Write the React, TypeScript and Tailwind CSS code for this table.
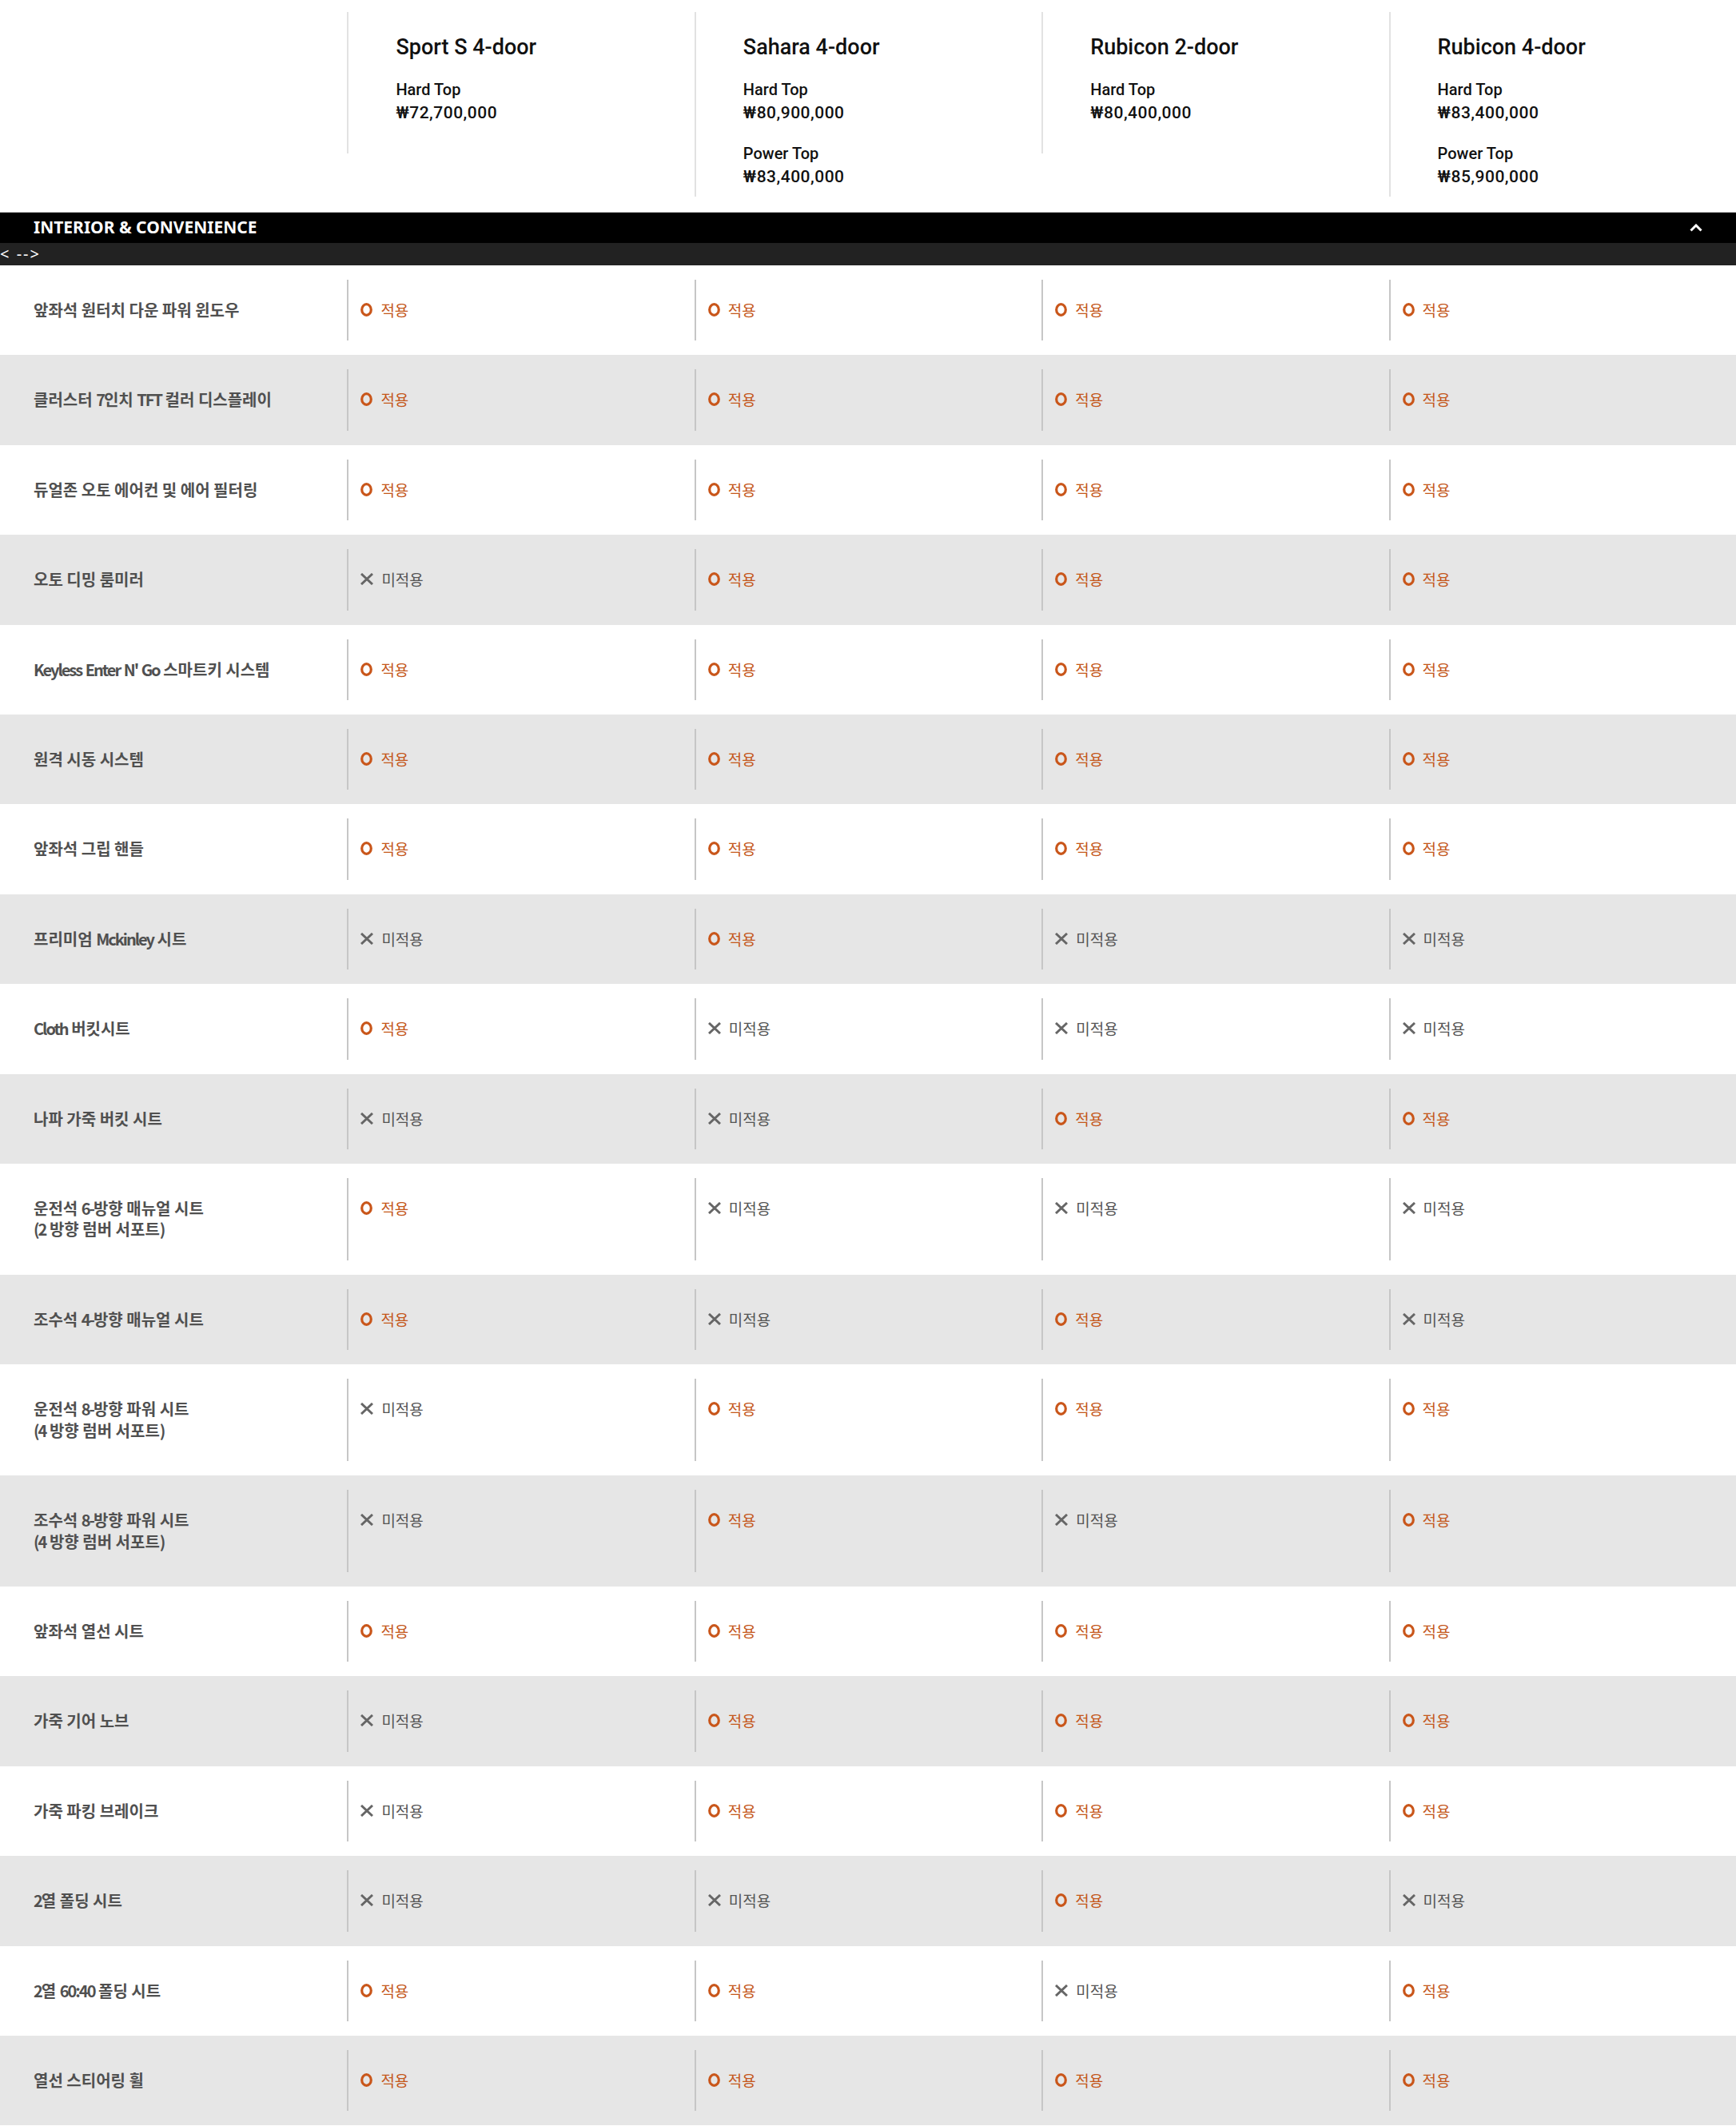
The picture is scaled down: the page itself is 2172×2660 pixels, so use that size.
const trims = [
  {
    name: "Sport S 4-door",
    prices: [{ top: "Hard Top", price: "₩72,700,000" }],
  },
  {
    name: "Sahara 4-door",
    prices: [
      { top: "Hard Top", price: "₩80,900,000" },
      { top: "Power Top", price: "₩83,400,000" },
    ],
  },
  {
    name: "Rubicon 2-door",
    prices: [{ top: "Hard Top", price: "₩80,400,000" }],
  },
  {
    name: "Rubicon 4-door",
    prices: [
      { top: "Hard Top", price: "₩83,400,000" },
      { top: "Power Top", price: "₩85,900,000" },
    ],
  },
];

// 1 = 적용, 0 = 미적용
const rows: { label: string[]; values: number[] }[] = [
  { label: ["앞좌석 원터치 다운 파워 윈도우"], values: [1, 1, 1, 1] },
  { label: ["클러스터 7인치 TFT 컬러 디스플레이"], values: [1, 1, 1, 1] },
  { label: ["듀얼존 오토 에어컨 및 에어 필터링"], values: [1, 1, 1, 1] },
  { label: ["오토 디밍 룸미러"], values: [0, 1, 1, 1] },
  { label: ["Keyless Enter N' Go 스마트키 시스템"], values: [1, 1, 1, 1] },
  { label: ["원격 시동 시스템"], values: [1, 1, 1, 1] },
  { label: ["앞좌석 그립 핸들"], values: [1, 1, 1, 1] },
  { label: ["프리미엄 Mckinley 시트"], values: [0, 1, 0, 0] },
  { label: ["Cloth 버킷시트"], values: [1, 0, 0, 0] },
  { label: ["나파 가죽 버킷 시트"], values: [0, 0, 1, 1] },
  { label: ["운전석 6-방향 매뉴얼 시트", "(2 방향 럼버 서포트)"], values: [1, 0, 0, 0] },
  { label: ["조수석 4-방향 매뉴얼 시트"], values: [1, 0, 1, 0] },
  { label: ["운전석 8-방향 파워 시트", "(4 방향 럼버 서포트)"], values: [0, 1, 1, 1] },
  { label: ["조수석 8-방향 파워 시트", "(4 방향 럼버 서포트)"], values: [0, 1, 0, 1] },
  { label: ["앞좌석 열선 시트"], values: [1, 1, 1, 1] },
  { label: ["가죽 기어 노브"], values: [0, 1, 1, 1] },
  { label: ["가죽 파킹 브레이크"], values: [0, 1, 1, 1] },
  { label: ["2열 폴딩 시트"], values: [0, 0, 1, 0] },
  { label: ["2열 60:40 폴딩 시트"], values: [1, 1, 0, 1] },
  { label: ["열선 스티어링 휠"], values: [1, 1, 1, 1] },
];

// latin runs in the labels are set much tighter than the hangul
function LabelLine({ text }: { text: string }) {
  const parts = text.split(/([A-Za-z0-9:'()\-]+)/);
  return (
    <div>
      {parts.map((part, k) =>
        k % 2 === 1 ? (
          <span key={k} className="tracking-[-2px]">
            {part}
          </span>
        ) : (
          <span key={k}>{part}</span>
        )
      )}
    </div>
  );
}

function RingIcon() {
  return (
    <svg width="15" height="17" viewBox="0 0 15 17" className="mt-[4px] shrink-0">
      <ellipse cx="7.5" cy="8.5" rx="5.8" ry="6.8" fill="none" stroke="#c9561a" strokeWidth="3.2" />
    </svg>
  );
}

function CrossIcon() {
  return (
    <svg width="16" height="15" viewBox="0 0 16 15" className="mt-[5px] shrink-0">
      <path d="M1 1 L15 14 M15 1 L1 14" stroke="#666666" strokeWidth="3" />
    </svg>
  );
}

function Value({ on }: { on: boolean }) {
  return (
    <div className="flex flex-col py-[18px]">
      <div className="flex flex-1 items-start gap-[10px] border-l-2 border-[#c6c6c6] py-[25px] pl-[15px]">
        {on ? <RingIcon /> : <CrossIcon />}
        <span
          className={`text-[19px] leading-[26.4px] ${on ? "text-[#c4571b]" : "text-[#555555]"}`}
        >
          {on ? "적용" : "미적용"}
        </span>
      </div>
    </div>
  );
}

export default function App() {
  return (
    <div className="w-[2172px] bg-white font-['Noto_Sans_CJK_KR','Noto_Sans',sans-serif]">
      {/* trim header */}
      <div className="grid h-[265px] grid-cols-5 items-start">
        <div />
        {trims.map((trim) => (
          <div key={trim.name} className="pt-[15px]">
            <div className="min-h-[177px] border-l-2 border-[#e2e2e2] pb-[10px] pl-[59px] pt-[29px] font-['Roboto',sans-serif] text-[#111]">
              <div className="text-[27px] font-medium leading-[30px]">{trim.name}</div>
              <div className="mt-[24px] flex flex-col gap-[22px]">
                {trim.prices.map((p) => (
                  <div key={p.top} className="text-[20px] leading-[29px]">
                    <div className="font-medium">{p.top}</div>
                    <div className="text-[21px] font-medium tracking-[0.5px]">{p.price}</div>
                  </div>
                ))}
              </div>
            </div>
          </div>
        ))}
      </div>

      {/* section bar */}
      <div className="border-t border-[#cccccc]">
        <div className="flex h-[38px] items-center justify-between bg-black px-[42px] font-['Noto_Sans',sans-serif] text-white">
          <span className="text-[21px] font-bold">INTERIOR &amp; CONVENIENCE</span>
          <svg width="16" height="10" viewBox="0 0 16 10">
            <path d="M1.5 8.5 L8 2 L14.5 8.5" fill="none" stroke="white" strokeWidth="3" />
          </svg>
        </div>
        <div className="flex h-[28px] items-center bg-[#222222] font-['Noto_Sans',sans-serif] text-[20px] leading-none tracking-[2px] text-white">
          {"< -->"}
        </div>
      </div>

      {/* feature rows */}
      {rows.map((row, i) => (
        <div
          key={i}
          className={`grid grid-cols-5 ${i % 2 === 1 ? "bg-[#e6e6e6]" : "bg-white"}`}
        >
          <div className="py-[18px] pl-[42px]">
            <div className="py-[25px] text-[20px] font-bold leading-[26.4px] text-[#505050]">
              {row.label.map((line) => (
                <LabelLine key={line} text={line} />
              ))}
            </div>
          </div>
          {row.values.map((v, j) => (
            <Value key={j} on={v === 1} />
          ))}
        </div>
      ))}
    </div>
  );
}
